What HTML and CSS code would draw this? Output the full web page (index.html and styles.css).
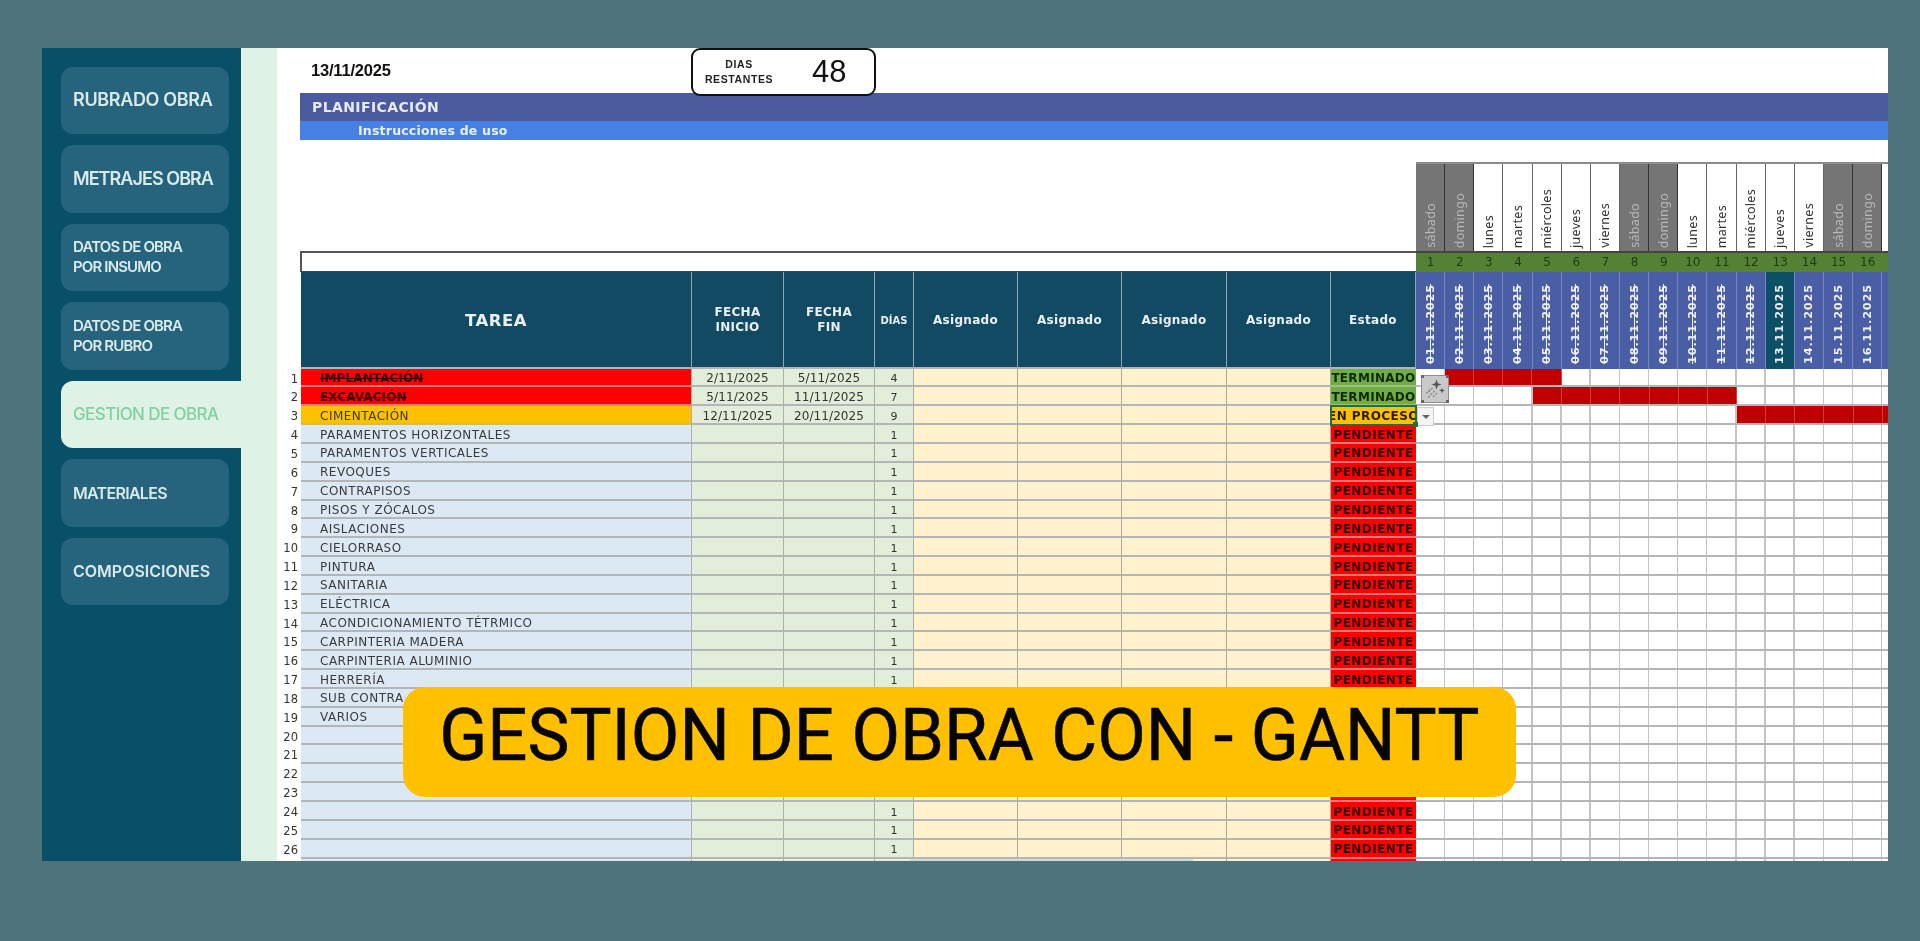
FILE: index.html
```html
<!DOCTYPE html>
<html lang="es">
<head>
<meta charset="utf-8">
<title>Gestion de obra con Gantt</title>
<link rel="stylesheet" href="styles.css">
</head>
<body>
<main class="frame">
  <nav class="side">
    <a class="nav big">RUBRADO OBRA</a>
    <a class="nav big tight">METRAJES OBRA</a>
    <a class="nav">DATOS DE OBRA<br>POR INSUMO</a>
    <a class="nav">DATOS DE OBRA<br>POR RUBRO</a>
    <a class="nav active">GESTION DE OBRA</a>
    <a class="nav mid narrow">MATERIALES</a>
    <a class="nav mid">COMPOSICIONES</a>
  </nav>
  <div class="strip"></div>
  <section class="sheet">
    <header class="top">
      <span class="date">13/11/2025</span>
      <div class="badge"><span class="badge-l">DIAS<br>RESTANTES</span><span class="badge-n">48</span></div>
    </header>
    <div class="bar-a">PLANIFICACIÓN</div>
    <div class="bar-b">Instrucciones de uso</div>

    <div class="weekrow days">
      <span class="wd off"><i>sábado</i></span><span class="wd off"><i>domingo</i></span><span class="wd"><i>lunes</i></span><span class="wd"><i>martes</i></span><span class="wd"><i>miércoles</i></span><span class="wd"><i>jueves</i></span><span class="wd"><i>viernes</i></span><span class="wd off"><i>sábado</i></span><span class="wd off"><i>domingo</i></span><span class="wd"><i>lunes</i></span><span class="wd"><i>martes</i></span><span class="wd"><i>miércoles</i></span><span class="wd"><i>jueves</i></span><span class="wd"><i>viernes</i></span><span class="wd off"><i>sábado</i></span><span class="wd off"><i>domingo</i></span><span class="wd"></span>
    </div>
    <div class="row numrow">
      <div class="title"></div>
      <div class="days nums"><span>1</span><span>2</span><span>3</span><span>4</span><span>5</span><span>6</span><span>7</span><span>8</span><span>9</span><span>10</span><span>11</span><span>12</span><span>13</span><span>14</span><span>15</span><span>16</span><span></span></div>
    </div>
    <div class="row head">
      <div class="blank"></div>
      <span class="h tarea">TAREA</span>
      <span class="h">FECHA<br>INICIO</span>
      <span class="h">FECHA<br>FIN</span>
      <span class="h dias">DÍAS</span>
      <span class="h">Asignado</span>
      <span class="h">Asignado</span>
      <span class="h">Asignado</span>
      <span class="h">Asignado</span>
      <span class="h">Estado</span>
      <div class="days dates">
        <span class="past"><i>01.11.2025</i></span><span class="past"><i>02.11.2025</i></span><span class="past"><i>03.11.2025</i></span><span class="past"><i>04.11.2025</i></span><span class="past"><i>05.11.2025</i></span><span class="past"><i>06.11.2025</i></span><span class="past"><i>07.11.2025</i></span><span class="past"><i>08.11.2025</i></span><span class="past"><i>09.11.2025</i></span><span class="past"><i>10.11.2025</i></span><span class="past"><i>11.11.2025</i></span><span class="past"><i>12.11.2025</i></span><span class="today"><i>13.11.2025</i></span><span><i>14.11.2025</i></span><span><i>15.11.2025</i></span><span><i>16.11.2025</i></span><span></span>
      </div>
    </div>

    <div class="row"><b class="n">1</b><span class="t red done">IMPLANTACIÓN</span><span class="f">2/11/2025</span><span class="f">5/11/2025</span><span class="d">4</span><span class="a"></span><span class="a"></span><span class="a"></span><span class="a"></span><span class="e ok">TERMINADO</span><div class="g"><span class="gb g1"></span></div></div>
    <div class="row"><b class="n">2</b><span class="t red done">EXCAVACIÓN</span><span class="f">5/11/2025</span><span class="f">11/11/2025</span><span class="d">7</span><span class="a"></span><span class="a"></span><span class="a"></span><span class="a"></span><span class="e ok">TERMINADO</span><div class="g"><span class="gb g2"></span></div></div>
    <div class="row"><b class="n">3</b><span class="t yel">CIMENTACIÓN</span><span class="f">12/11/2025</span><span class="f">20/11/2025</span><span class="d">9</span><span class="a"></span><span class="a"></span><span class="a"></span><span class="a"></span><span class="e wip"><em>EN PROCESO</em></span><div class="g"><span class="gb g3"></span></div></div>
    <div class="row"><b class="n">4</b><span class="t">PARAMENTOS HORIZONTALES</span><span class="f"></span><span class="f"></span><span class="d">1</span><span class="a"></span><span class="a"></span><span class="a"></span><span class="a"></span><span class="e">PENDIENTE</span><div class="g"></div></div>
    <div class="row"><b class="n">5</b><span class="t">PARAMENTOS VERTICALES</span><span class="f"></span><span class="f"></span><span class="d">1</span><span class="a"></span><span class="a"></span><span class="a"></span><span class="a"></span><span class="e">PENDIENTE</span><div class="g"></div></div>
    <div class="row"><b class="n">6</b><span class="t">REVOQUES</span><span class="f"></span><span class="f"></span><span class="d">1</span><span class="a"></span><span class="a"></span><span class="a"></span><span class="a"></span><span class="e">PENDIENTE</span><div class="g"></div></div>
    <div class="row"><b class="n">7</b><span class="t">CONTRAPISOS</span><span class="f"></span><span class="f"></span><span class="d">1</span><span class="a"></span><span class="a"></span><span class="a"></span><span class="a"></span><span class="e">PENDIENTE</span><div class="g"></div></div>
    <div class="row"><b class="n">8</b><span class="t">PISOS Y ZÓCALOS</span><span class="f"></span><span class="f"></span><span class="d">1</span><span class="a"></span><span class="a"></span><span class="a"></span><span class="a"></span><span class="e">PENDIENTE</span><div class="g"></div></div>
    <div class="row"><b class="n">9</b><span class="t">AISLACIONES</span><span class="f"></span><span class="f"></span><span class="d">1</span><span class="a"></span><span class="a"></span><span class="a"></span><span class="a"></span><span class="e">PENDIENTE</span><div class="g"></div></div>
    <div class="row"><b class="n">10</b><span class="t">CIELORRASO</span><span class="f"></span><span class="f"></span><span class="d">1</span><span class="a"></span><span class="a"></span><span class="a"></span><span class="a"></span><span class="e">PENDIENTE</span><div class="g"></div></div>
    <div class="row"><b class="n">11</b><span class="t">PINTURA</span><span class="f"></span><span class="f"></span><span class="d">1</span><span class="a"></span><span class="a"></span><span class="a"></span><span class="a"></span><span class="e">PENDIENTE</span><div class="g"></div></div>
    <div class="row"><b class="n">12</b><span class="t">SANITARIA</span><span class="f"></span><span class="f"></span><span class="d">1</span><span class="a"></span><span class="a"></span><span class="a"></span><span class="a"></span><span class="e">PENDIENTE</span><div class="g"></div></div>
    <div class="row"><b class="n">13</b><span class="t">ELÉCTRICA</span><span class="f"></span><span class="f"></span><span class="d">1</span><span class="a"></span><span class="a"></span><span class="a"></span><span class="a"></span><span class="e">PENDIENTE</span><div class="g"></div></div>
    <div class="row"><b class="n">14</b><span class="t">ACONDICIONAMIENTO TÉTRMICO</span><span class="f"></span><span class="f"></span><span class="d">1</span><span class="a"></span><span class="a"></span><span class="a"></span><span class="a"></span><span class="e">PENDIENTE</span><div class="g"></div></div>
    <div class="row"><b class="n">15</b><span class="t">CARPINTERIA MADERA</span><span class="f"></span><span class="f"></span><span class="d">1</span><span class="a"></span><span class="a"></span><span class="a"></span><span class="a"></span><span class="e">PENDIENTE</span><div class="g"></div></div>
    <div class="row"><b class="n">16</b><span class="t">CARPINTERIA ALUMINIO</span><span class="f"></span><span class="f"></span><span class="d">1</span><span class="a"></span><span class="a"></span><span class="a"></span><span class="a"></span><span class="e">PENDIENTE</span><div class="g"></div></div>
    <div class="row"><b class="n">17</b><span class="t">HERRERÍA</span><span class="f"></span><span class="f"></span><span class="d">1</span><span class="a"></span><span class="a"></span><span class="a"></span><span class="a"></span><span class="e">PENDIENTE</span><div class="g"></div></div>
    <div class="row"><b class="n">18</b><span class="t">SUB CONTRA</span><span class="f"></span><span class="f"></span><span class="d"></span><span class="a"></span><span class="a"></span><span class="a"></span><span class="a"></span><span class="e"></span><div class="g"></div></div>
    <div class="row"><b class="n">19</b><span class="t">VARIOS</span><span class="f"></span><span class="f"></span><span class="d"></span><span class="a"></span><span class="a"></span><span class="a"></span><span class="a"></span><span class="e"></span><div class="g"></div></div>
    <div class="row"><b class="n">20</b><span class="t"></span><span class="f"></span><span class="f"></span><span class="d"></span><span class="a"></span><span class="a"></span><span class="a"></span><span class="a"></span><span class="e"></span><div class="g"></div></div>
    <div class="row"><b class="n">21</b><span class="t"></span><span class="f"></span><span class="f"></span><span class="d"></span><span class="a"></span><span class="a"></span><span class="a"></span><span class="a"></span><span class="e"></span><div class="g"></div></div>
    <div class="row"><b class="n">22</b><span class="t"></span><span class="f"></span><span class="f"></span><span class="d"></span><span class="a"></span><span class="a"></span><span class="a"></span><span class="a"></span><span class="e"></span><div class="g"></div></div>
    <div class="row"><b class="n">23</b><span class="t"></span><span class="f"></span><span class="f"></span><span class="d">1</span><span class="a"></span><span class="a"></span><span class="a"></span><span class="a"></span><span class="e">PENDIENTE</span><div class="g"></div></div>
    <div class="row"><b class="n">24</b><span class="t"></span><span class="f"></span><span class="f"></span><span class="d">1</span><span class="a"></span><span class="a"></span><span class="a"></span><span class="a"></span><span class="e">PENDIENTE</span><div class="g"></div></div>
    <div class="row"><b class="n">25</b><span class="t"></span><span class="f"></span><span class="f"></span><span class="d">1</span><span class="a"></span><span class="a"></span><span class="a"></span><span class="a"></span><span class="e">PENDIENTE</span><div class="g"></div></div>
    <div class="row"><b class="n">26</b><span class="t"></span><span class="f"></span><span class="f"></span><span class="d">1</span><span class="a"></span><span class="a"></span><span class="a"></span><span class="a"></span><span class="e">PENDIENTE</span><div class="g"></div></div>
    <div class="row"><b class="n"></b><span class="t"></span><span class="f"></span><span class="f"></span><span class="d"></span><span class="a"></span><span class="a"></span><span class="a"></span><span class="a"></span><span class="e"></span><div class="g"></div></div>

    <div class="quick">
      <svg viewBox="0 0 24 24" width="24" height="24"><path class="spark" d="M13.500 2.500l1.300 3.700 3.700 1.300-3.700 1.300-1.300 3.700-1.300-3.700-3.700-1.300 3.700-1.300z"/><path class="spark" d="M19 10.500l.8 2.200 2.200.8-2.200.8-.8 2.200-.8-2.200-2.200-.8 2.200-.8z"/><path class="trail" d="M9.500 11l-5 5M11.500 14l-7 7M7 12.500l-4 4M14 16l-4 4"/></svg>
      <span class="cn c1"></span><span class="cn c2"></span><span class="cn c3"></span><span class="cn c4"></span>
    </div>
    <div class="drop"><span class="caret"></span></div>
    <div class="handle"></div>
    <div class="hscroll"></div>
  </section>
  <div class="banner"><span class="banner-t">GESTION DE OBRA CON - GANTT</span></div>
</main>
</body>
</html>
```
FILE: styles.css
```css
* { box-sizing: border-box; }
html, body { margin: 0; height: 100%; }
body { background: #4d747b; padding: 48px 0 0 42px; overflow: hidden; font-family: "DejaVu Sans", sans-serif; }

.frame { position: relative; display: flex; width: 1846px; height: 813px; }

.side { width: 199px; flex: none; background: #084f68; padding: 18.500px 12px 0 19px; display: flex; flex-direction: column; gap: 11px; position: relative; z-index: 2; filter: blur(.35px); }
.nav { height: 67.500px; flex: none; border-radius: 12px; background: #26647d; color: #d9eaea; display: flex; align-items: center; padding-left: 12px; font: 600 15px/20px Inter, sans-serif; letter-spacing: -.85px; }
.nav.big { font-size: 18px; letter-spacing: -.35px; }
.nav.big.tight { letter-spacing: -.95px; }
.nav.mid { font-size: 16px; letter-spacing: 0; }
.nav.mid.narrow { letter-spacing: -.7px; }
.nav.active { background: #def3e6; color: #84d0a2; margin-right: -48px; border-radius: 12px 0 0 12px; font-size: 17px; font-weight: 500; letter-spacing: -.6px; }
.strip { width: 36px; flex: none; background: #def3e6; }

.sheet { position: relative; width: 1611px; flex: none; background: #fff; overflow: hidden; --grid: #b2b6b9; filter: blur(.35px); }

.top { height: 45px; display: flex; align-items: center; padding-left: 34px; position: relative; z-index: 2; }
.date { width: 380px; font: 700 16.500px "Liberation Sans", sans-serif; color: #111; letter-spacing: -.2px; }
.badge { width: 185px; height: 48px; margin-top: 2px; border: 2px solid #111; border-radius: 9px; background: #fff; display: flex; align-items: center; padding-left: 11px; }
.badge-l { width: 100px; text-align: center; font: 700 10.500px/15px "Liberation Sans", sans-serif; letter-spacing: .6px; color: #222; padding-right: 30px; }
.badge-n { font: 400 31px "Liberation Sans", sans-serif; color: #111; margin-left: 8px; }

.bar-a { margin-left: 23px; height: 28px; background: #4b5b9d; color: #e6eaf5; font: 700 14px/29px "DejaVu Sans", sans-serif; letter-spacing: .4px; padding-left: 12px; }
.bar-b { margin-left: 23px; height: 19px; background: #4780e4; color: #e8f0fd; font: 700 12.500px/20px "DejaVu Sans", sans-serif; letter-spacing: .2px; padding-left: 58px; }

.days { display: grid; grid-template-columns: repeat(17, 29.150px); overflow: hidden; }
.weekrow { margin: 22px 0 0 1139px; height: 91px; border-top: 2px solid #8c8c8c; border-bottom: 2px solid #444; }
.wd { border-right: 1.500px solid #666; display: flex; justify-content: center; align-items: flex-end; background: #fff; color: #333; padding-bottom: 3px; }
.wd i, .dates i { writing-mode: vertical-rl; transform: rotate(180deg); font-style: normal; }
.wd i { font: 400 12.500px "Noto Sans", sans-serif; letter-spacing: .3px; }
.wd.off { background: #757575; color: #b8b8b8; border-right-color: #333; }

.row { display: grid; grid-template-columns: 24px 391px 92px 91px 39px 104px 104px 105px 104px 85px 472px; grid-template-rows: 18.850px; height: 18.850px; }
.numrow { height: 19px; grid-template-rows: 19px; }
.title { grid-column: 2 / 11; margin: -2px 0 0 -1px; border: 2px solid #555; border-right: 0; border-bottom: 1px solid #444; }
.nums { background: #548235; color: #1e3a10; font-size: 12px; line-height: 19px; text-align: center; }
.head { height: 96.600px; grid-template-rows: 96.600px; }
.head > span { border-bottom: 0; }
.h { background: #124a63; color: #e9eff2; border-right: 1px solid #8fa6b0; padding-top: 2px; display: flex; align-items: center; justify-content: center; text-align: center; font: 700 12px/15.500px "DejaVu Sans", sans-serif; letter-spacing: .3px; }
.h.tarea { font-size: 16.500px; letter-spacing: .5px; }
.h.dias { font-size: 10px; letter-spacing: 0; }
.dates span { background: #4a5ea6; border-right: 1px solid #7887bd; display: flex; justify-content: center; align-items: center; padding-top: 8px; color: #eef1fa; }
.dates span.today { background: #0c5068; }
.dates i { font: 700 11.300px "DejaVu Sans", sans-serif; letter-spacing: .85px; }
.dates .past i { text-decoration: line-through; }

.row > span, .g { border-bottom: 2px solid var(--grid); }
.n { font: 400 11.500px/20px "DejaVu Sans", sans-serif; color: #333; text-align: right; padding-right: 3px; }
.t { background: #dce9f5; color: #3a3a3a; border-right: 1px solid #a9b2a9; font-size: 12px; line-height: 17px; padding-top: 1.500px; padding-left: 19px; letter-spacing: .5px; white-space: nowrap; overflow: hidden; }
.row > .t.red { background: #fe0000; color: #3a0000; letter-spacing: .1px; border-bottom-color: #e87878; }
.t.done { font-weight: 700; text-decoration: line-through; }
.row > .t.yel { background: #ffc000; border-bottom-color: #d9b85a; }
.f { background: #e2eed9; color: #333; border-right: 1px solid #a9b2a9; font-size: 12px; line-height: 17px; padding-top: 1.500px; text-align: center; letter-spacing: .1px; }
.d { background: #e2eed9; color: #333; border-right: 1px solid #a9b2a9; font-size: 11px; line-height: 17px; padding-top: 1.500px; text-align: center; }
.a { background: #fff2cc; border-right: 1px solid #aaa99a; }
.row > .e { background: #fe0000; color: #300; font: 700 12px/17px "DejaVu Sans", sans-serif; padding-top: 1.500px; letter-spacing: .45px; text-align: center; white-space: nowrap; overflow: hidden; border-bottom-color: #e87878; }
.row > .e.ok { background: #70ad47; color: #0d2a02; overflow: visible; position: relative; z-index: 1; letter-spacing: .3px; border-bottom-color: #9cc283; }
.row > .e.wip { background: #ffc000; color: #2a1c00; outline: 2px solid #1f6f43; outline-offset: -1px; position: relative; z-index: 3; display: flex; justify-content: center; border-bottom: 0; }
.e.wip em { font-style: normal; flex: none; }

.g { display: grid; grid-template-columns: repeat(17, 29.150px); height: 18.850px; background: repeating-linear-gradient(90deg, #fff 0 27.700px, #c4c4c4 27.700px 29.150px); overflow: hidden; }
.gb { height: 16.850px; background: repeating-linear-gradient(90deg, #c00000 0 28.150px, #d43c3c 28.150px 29.150px); }
.g1 { grid-column: 2 / 6; }
.g2 { grid-column: 5 / 12; }
.g3 { grid-column: 12 / 18; }

.quick { position: absolute; left: 1144px; top: 327px; width: 28px; height: 28px; background: #c9c9c9; border: 1px solid #8e8e8e; display: flex; align-items: center; justify-content: center; z-index: 5; }
.cn { position: absolute; width: 3px; height: 3px; background: #666; }
.c1 { left: -1px; top: -1px; }
.c2 { right: -1px; top: -1px; }
.c3 { left: -1px; bottom: -1px; }
.c4 { right: -1px; bottom: -1px; }
.spark { fill: #555; }
.trail { stroke: #8a8a8a; stroke-width: 1.500; stroke-dasharray: 2 1.500; fill: none; }
.drop { position: absolute; left: 1140px; top: 359px; width: 17px; height: 19px; background: #f4f4f4; border: 1px solid #cfcfcf; display: flex; align-items: center; justify-content: center; z-index: 5; }
.caret { width: 0; height: 0; border: 4.500px solid transparent; border-top: 4.500px solid #666; border-bottom: 0; }
.handle { position: absolute; left: 1136px; top: 374px; width: 5px; height: 5px; background: #1f6f43; z-index: 6; }
.hscroll { position: absolute; left: 633px; bottom: 0; width: 283px; height: 2px; background: #d7d7d7; z-index: 4; }

.banner { position: absolute; z-index: 10; left: 361px; top: 638.500px; width: 1113px; height: 110px; padding-bottom: 13px; border-radius: 22px; background: #ffc000; color: #050505; display: flex; align-items: center; justify-content: center; font: 400 73px Roboto, sans-serif; -webkit-text-stroke: .6px #050505; white-space: nowrap; }
.banner-t { display: block; transform: scaleX(.968); }
```
